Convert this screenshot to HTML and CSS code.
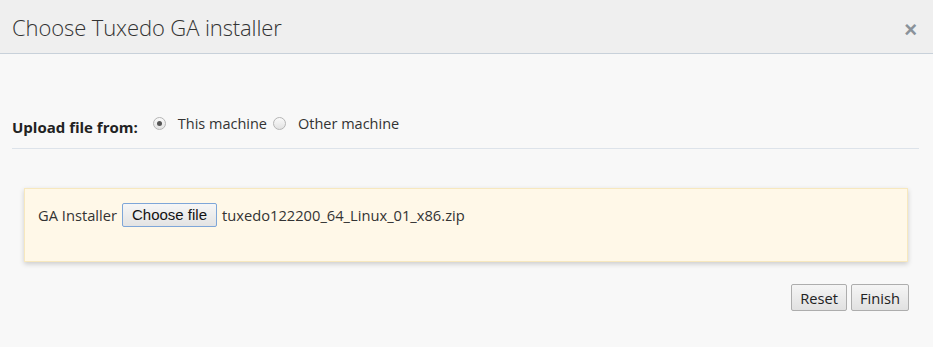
FILE: index.html
```html
<!DOCTYPE html>
<html lang="en">
<head>
  <meta charset="UTF-8">
  <meta name="viewport" content="width=device-width, initial-scale=1.0">
  <title>Choose Tuxedo GA installer</title>
  <link rel="stylesheet" href="styles.css">
</head>
<body>
  <div class="modal">
    <div class="modal-header">
      <h1>Choose Tuxedo GA installer</h1>
      <span class="close">&times;</span>
    </div>

    <div class="modal-body">
      <div class="source-row">
        <span class="source-label">Upload file from:</span>
        <label class="radio"><span class="dot checked"></span>This machine</label>
        <label class="radio"><span class="dot"></span>Other machine</label>
      </div>

      <div class="panel">
        <span class="field-label">GA Installer</span>
        <span class="file-btn">Choose file</span>
        <span class="file-name">tuxedo122200_64_Linux_01_x86.zip</span>
      </div>

      <div class="actions">
        <button class="btn">Reset</button>
        <button class="btn">Finish</button>
      </div>
    </div>
  </div>
</body>
</html>
```

FILE: styles.css
```css
body {
  margin: 0;
  font-family: "Open Sans", Arial, sans-serif;
  font-size: 14.7px;
  color: #333;
  background-color: #f8f8f8;
}

.modal {
  width: 933px;
  height: 347px;
  background-color: #f8f8f8;
}

.modal-header {
  height: 53px;
  background-color: #efefef;
  border-bottom: 1px solid #c8d1da;
  display: flex;
  align-items: center;
  justify-content: space-between;
  padding: 0 16px 0 12px;
}

h1 {
  margin: 0;
  font-size: 22px;
  font-weight: 300;
  color: #333;
  letter-spacing: -0.1px;
}

.close {
  font-family: Arial, sans-serif;
  font-size: 22px;
  font-weight: bold;
  color: #8a929a;
  margin-top: 6px;
}

.modal-body {
  padding: 0 14px 0 12px;
}

.source-row {
  display: flex;
  align-items: center;
  padding-top: 55px;
  padding-bottom: 11px;
  border-bottom: 1px solid #dde3ea;
}

.source-label {
  font-weight: bold;
  font-size: 15px;
  color: #222;
  margin-top: 8px;
  margin-right: 15px;
}

.radio {
  display: flex;
  align-items: center;
  color: #333;
  font-size: 14.5px;
}

.dot {
  width: 11px;
  height: 11px;
  border-radius: 50%;
  border: 1px solid #b5b5b5;
  background: linear-gradient(#fafafa, #e2e2e2);
  margin: 0 12px 0 0;
  position: relative;
}

.dot.checked::after {
  content: "";
  position: absolute;
  left: 3px;
  top: 3px;
  width: 5px;
  height: 5px;
  border-radius: 50%;
  background: #555;
}

.radio + .radio {
  margin-left: 6px;
}

.panel {
  margin: 39px 11px 0 12px;
  height: 74px;
  box-sizing: border-box;
  padding: 14px 13px;
  background-color: #fff8e8;
  border: 1px solid #f7e8be;
  box-shadow: 0 2px 5px rgba(0, 0, 0, 0.18);
  display: flex;
  align-items: flex-start;
}

.field-label {
  line-height: 24px;
  margin-right: 5px;
}

.file-btn {
  font-family: "Liberation Sans", Arial, sans-serif;
  font-size: 15px;
  color: #111;
  height: 24px;
  line-height: 22px;
  box-sizing: border-box;
  padding: 0 9px;
  border: 1px solid #7ea6d8;
  border-radius: 2px;
  background: linear-gradient(#f6f6f6, #e3e3e3);
  margin-right: 5px;
}

.file-name {
  line-height: 24px;
}

.actions {
  display: flex;
  justify-content: flex-end;
  gap: 4px;
  margin-top: 22px;
  margin-right: 10px;
}

.btn {
  font-family: "Open Sans", Arial, sans-serif;
  font-size: 14.7px;
  color: #222;
  height: 27px;
  padding: 0 8px;
  border: 1px solid #adadad;
  border-radius: 2px;
  background: linear-gradient(#f5f5f5, #e1e1e1);
}
```
